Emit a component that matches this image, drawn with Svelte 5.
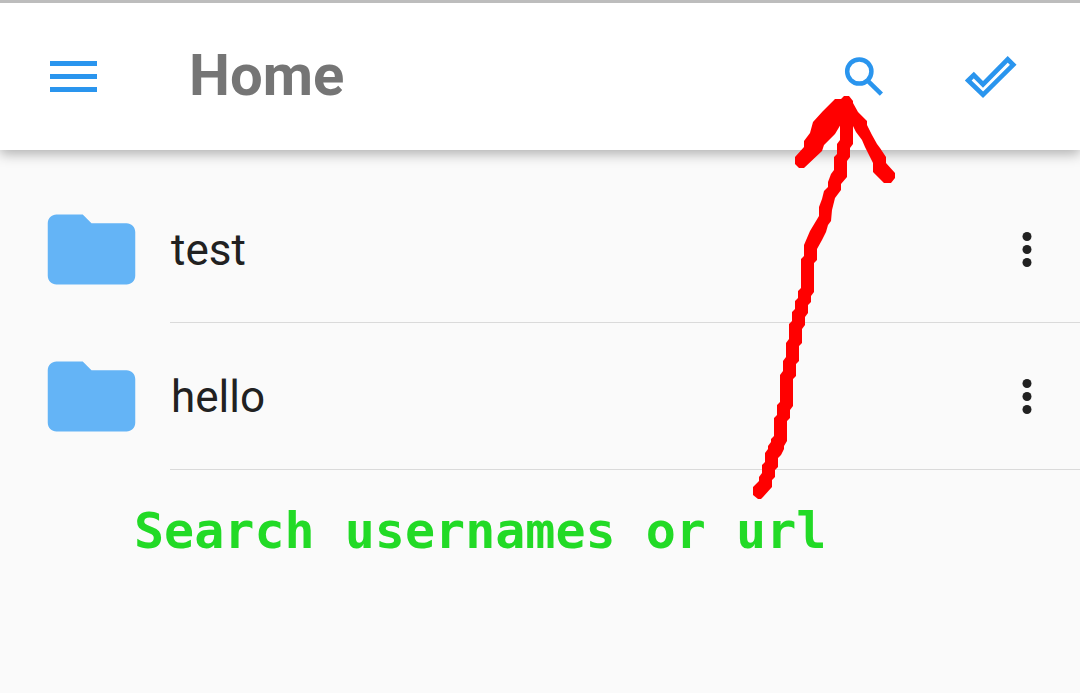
<script>
  const folders = ['test', 'hello'];
</script>

<div class="page">
  <header>
    <button class="menu" aria-label="Open menu">
      <svg width="48" height="34" viewBox="0 0 48 34">
        <path d="M0 3.5h47M0 16.5h47M0 29.5h47" stroke="#2a95ee" stroke-width="5.2" />
      </svg>
    </button>
    <h1>Home</h1>
    <button aria-label="Search">
      <svg width="52" height="52" viewBox="0 0 52 52" fill="none" stroke="#2a95ee" stroke-width="4.5">
        <circle cx="21.3" cy="20.5" r="12.1" />
        <path d="M30.6 30.6 43.4 43.2" />
      </svg>
    </button>
    <button aria-label="Select all">
      <svg width="60" height="52" viewBox="0 0 60 52" fill="none" stroke="#2a95ee" stroke-width="4.7">
        <path d="M8.200 29.500l5.600-5.500 9.200 9.500L47.700 8.300l5.500 5.500L23 43.800z" />
      </svg>
    </button>

    <svg class="arrow" width="106" height="410" viewBox="790 90 106 410" fill="#f00" aria-hidden="true">
      <path d="M753 491V487L759 481V477L762 473V465L765 462V453L768 449V446L771 442V439L774 436V418L777 415V405L780 402V375L783 371V361L786 357V343L789 339V324L792 321V312L795 309V301L798 298V291L801 288V259L804 256V245L810 231 816 221 819 216V207L822 199 824 191 828 187V182L831 174 834 170V157L837 154V144L840 140V110H853V144L850 148V157L847 161V177L841 184V190L835 198 832 210 831 221 828 225 826 232 822 240 817 249V260L814 263V292L811 296V302L808 305V313L805 317V325L802 329V343L799 346V361L796 364V376L793 379V406L790 410V418L787 421V441L784 446V449L781 455 778 458V467L775 470V477L772 480V487L763 497 761 499H758L753 495z" />
      <path d="M844 96H849L853 101V103L858 112 867 121V125L872 135 877 144 880 148 886 157V163L895 173V178L891 183H884L873 172V163L865 147 862 140 856 132 853 126V122L843 120.500 838 129 835 134 824 145 822 151 804 168H799L795 164V157L804 147V141L810 133 813 122 823 111 835 99H841z" />
    </svg>
  </header>

  <main>
    <ul>
      {#each folders as folder}
        <li>
          <svg class="folder" width="105" height="105" viewBox="0 0 24 24">
            <path d="M10 4H4c-1.100 0-2 .9-2 2v12c0 1.100.9 2 2 2h16c1.100 0 2-.9 2-2V8c0-1.100-.9-2-2-2h-8l-2-2z" fill="#64b4f6" />
          </svg>
          <div class="entry">
            <span>{folder}</span>
            <button aria-label={`Options for ${folder}`}>
              <svg width="20" height="40" viewBox="0 0 20 40" fill="#212121">
                <circle cx="10" cy="7.500" r="4.500" />
                <circle cx="10" cy="20.500" r="4.500" />
                <circle cx="10" cy="33.500" r="4.500" />
              </svg>
            </button>
          </div>
        </li>
      {/each}
    </ul>
    <p>Search usernames or url</p>
  </main>
</div>

<style>
  :global(body) {
    margin: 0;
    background: #fafafa;
  }

  .page {
    min-height: 100vh;
    font-family: Roboto, sans-serif;
    color: #212121;
  }

  header {
    position: relative;
    display: flex;
    align-items: center;
    box-sizing: border-box;
    height: 150px;
    padding: 0 60px 0 50px;
    border-top: 3px solid #bdbdbd;
    background: #fff;
    box-shadow: 0 4px 12px rgba(0, 0, 0, 0.3);
  }

  button {
    display: flex;
    padding: 0;
    border: 0;
    background: none;
    cursor: pointer;
  }

  header button + button {
    margin-left: 70px;
  }

  h1 {
    flex: 1;
    margin: 0;
    padding: 0 0 4px 91px;
    font-size: 58px;
    line-height: 68px;
    font-weight: 700;
    color: #757575;
  }

  .arrow {
    position: absolute;
    top: 87px;
    right: 184px;
    overflow: visible;
    pointer-events: none;
  }

  ul {
    margin: 0;
    padding: 26px 0 0;
    list-style: none;
  }

  li {
    display: flex;
    align-items: center;
    padding-left: 39px;
  }

  .folder {
    flex: none;
  }

  .entry {
    display: flex;
    flex: 1;
    align-items: center;
    justify-content: space-between;
    height: 146px;
    margin-left: 26px;
    padding-right: 43px;
    border-bottom: 1px solid #dadada;
    font-size: 44px;
    line-height: 52px;
  }

  .entry span {
    padding: 2px 0 0 1px;
  }

  p {
    margin: 0;
    padding: 32px 0 32px 134px;
    font-family: "DejaVu Sans Mono", monospace;
    font-size: 50px;
    line-height: 58px;
    font-weight: 700;
    color: #22da26;
  }
</style>
